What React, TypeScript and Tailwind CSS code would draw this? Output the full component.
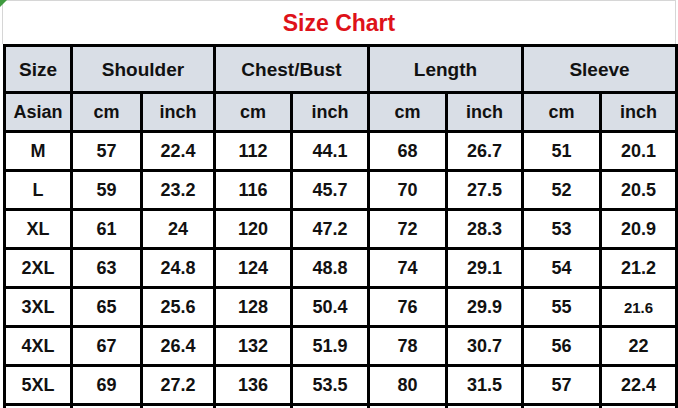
const rows: string[][] = [
  ["M", "57", "22.4", "112", "44.1", "68", "26.7", "51", "20.1"],
  ["L", "59", "23.2", "116", "45.7", "70", "27.5", "52", "20.5"],
  ["XL", "61", "24", "120", "47.2", "72", "28.3", "53", "20.9"],
  ["2XL", "63", "24.8", "124", "48.8", "74", "29.1", "54", "21.2"],
  ["3XL", "65", "25.6", "128", "50.4", "76", "29.9", "55", "21.6"],
  ["4XL", "67", "26.4", "132", "51.9", "78", "30.7", "56", "22"],
  ["5XL", "69", "27.2", "136", "53.5", "80", "31.5", "57", "22.4"],
  ["", "", "", "", "", "", "", "", ""],
];

const groups = ["Shoulder", "Chest/Bust", "Length", "Sleeve"];

function Cell({
  children,
  head,
  className = "",
}: {
  children?: React.ReactNode;
  head?: boolean;
  className?: string;
}) {
  return (
    <div
      className={`flex items-center justify-center ${
        head ? "bg-[#d9dee6]" : "bg-white"
      } ${className}`}
    >
      {children}
    </div>
  );
}

export default function App() {
  return (
    <div
      className="relative w-[678px] h-[408px] overflow-hidden bg-white font-bold text-[#111]"
      style={{ fontFamily: '"Liberation Sans", Arial, sans-serif' }}
    >
      {/* spreadsheet corner marker */}
      <div className="absolute left-0 top-0 w-0 h-0 border-t-[7px] border-r-[7px] border-t-[#3f9a3f] border-r-transparent" />

      {/* Title */}
      <div className="ml-[2px] w-[674px] h-[44px] border-t border-x border-[#d6d6d6] pt-[11px] text-center text-[23px] leading-[23px] text-[#de1219]">
        Size Chart
      </div>

      {/* Table */}
      <div className="ml-[3px] w-[675px] grid grid-cols-[64px_67px_70px_74px_74px_75px_73px_75px_73px] grid-rows-[44px_repeat(9,36px)] gap-[3px] p-[3px] bg-black text-[18px] leading-none">
        <Cell head className="text-[19px]">Size</Cell>
        {groups.map((g) => (
          <Cell key={g} head className="col-span-2 text-[19px]">
            {g}
          </Cell>
        ))}

        <Cell head>Asian</Cell>
        {groups.map((g) => (
          <div key={g} className="contents">
            <Cell head>cm</Cell>
            <Cell head>inch</Cell>
          </div>
        ))}

        {rows.map((r, i) =>
          r.map((v, j) => (
            <Cell
              key={`${i}-${j}`}
              className={v === "21.6" ? "text-[15px]" : ""}
            >
              {v}
            </Cell>
          ))
        )}
      </div>
    </div>
  );
}
